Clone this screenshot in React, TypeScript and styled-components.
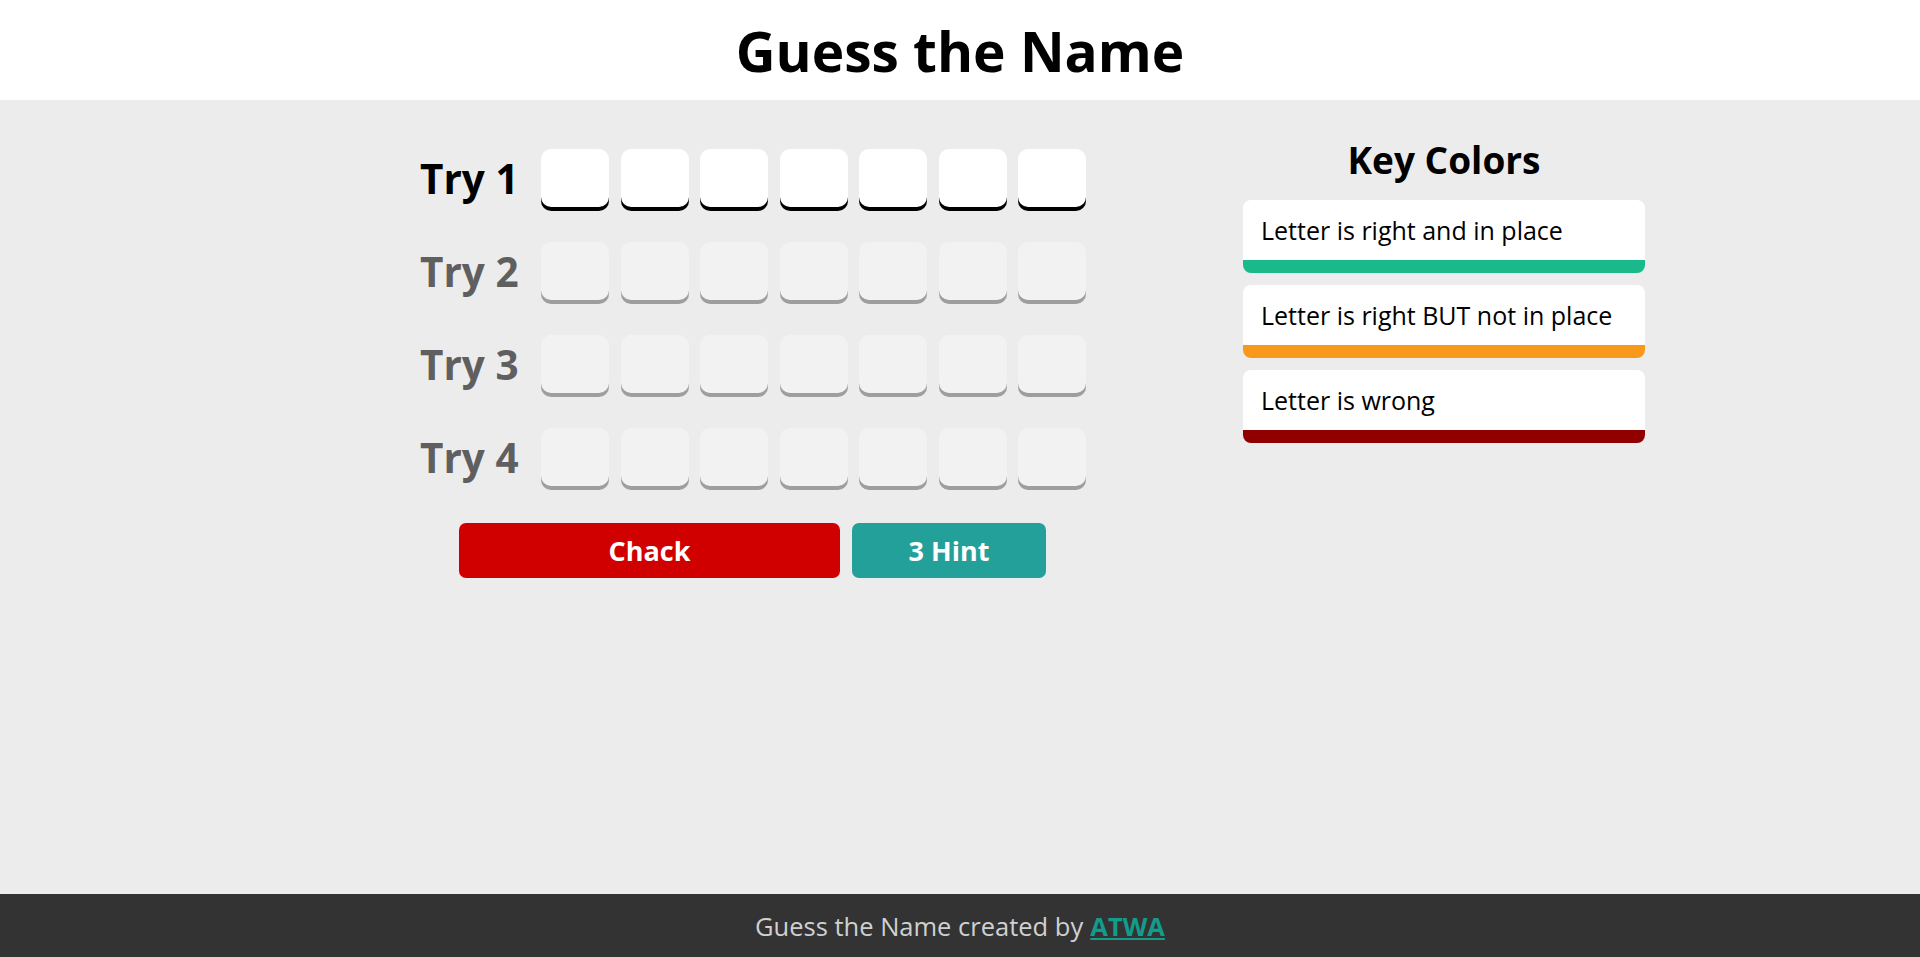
import styled, { createGlobalStyle } from "styled-components"

const GlobalStyle = createGlobalStyle`
  * {
    box-sizing: border-box;
  }
  body {
    margin: 0;
    font-family: "Open Sans", "Noto Sans", sans-serif;
    background-color: #ececec;
  }
`

const tries = [1, 2, 3, 4]
const letters = 7

const keys = [
  { text: "Letter is right and in place", color: "#19b98b" },
  { text: "Letter is right BUT not in place", color: "#f8991b" },
  { text: "Letter is wrong", color: "#900000" },
]

export default function App() {
  return (
    <Page>
      <GlobalStyle />
      <Header>
        <Title>Guess the Name</Title>
      </Header>
      <Main>
        <Game>
          {tries.map((n) => (
            <TryRow key={n}>
              <TryLabel active={n === 1}>Try {n}</TryLabel>
              <Boxes>
                {Array.from({ length: letters }).map((_, i) => (
                  <LetterBox key={i} active={n === 1} />
                ))}
              </Boxes>
            </TryRow>
          ))}
          <Controls>
            <CheckButton>Chack</CheckButton>
            <HintButton>3 Hint</HintButton>
          </Controls>
        </Game>
        <KeyColors>
          <KeyTitle>Key Colors</KeyTitle>
          {keys.map((k) => (
            <KeyCard key={k.text} band={k.color}>
              {k.text}
            </KeyCard>
          ))}
        </KeyColors>
      </Main>
      <Footer>
        Guess the Name created by <FooterLink href="#">ATWA</FooterLink>
      </Footer>
    </Page>
  )
}

const Page = styled.div`
  display: flex;
  flex-direction: column;
  min-height: 100vh;
`

const Header = styled.header`
  height: 100px;
  display: flex;
  align-items: center;
  justify-content: center;
  background-color: #fff;
`

const Title = styled.h1`
  margin: 0;
  font-size: 55px;
  font-weight: 700;
  color: #000;
`

const Main = styled.main`
  flex: 1;
  display: flex;
  align-items: flex-start;
  padding: 34px 275px 0 420px;
  justify-content: space-between;
`

const Game = styled.div`
  display: flex;
  flex-direction: column;
  gap: 35px;
  margin-top: 15px;
`

const TryRow = styled.div`
  display: flex;
  align-items: center;
`

const TryLabel = styled.span<{ active?: boolean }>`
  width: 121px;
  font-size: 40.5px;
  font-weight: 700;
  color: ${(p) => (p.active ? "#000" : "#5f5f5f")};
`

const Boxes = styled.div`
  display: flex;
  gap: 11.5px;
`

const LetterBox = styled.div<{ active?: boolean }>`
  width: 68px;
  height: 58px;
  border-radius: 10px;
  background-color: ${(p) => (p.active ? "#fff" : "#f2f2f2")};
  box-shadow: 0 4px 0 ${(p) => (p.active ? "#000" : "#9e9e9e")};
`

const Controls = styled.div`
  display: flex;
  gap: 12px;
  padding-left: 39px;
  margin-top: 2px;
`

const Button = styled.button`
  height: 55px;
  border: none;
  border-radius: 7px;
  color: #fff;
  font-family: "Open Sans", "Noto Sans", sans-serif;
  font-size: 27px;
  font-weight: 700;
  cursor: pointer;
`

const CheckButton = styled(Button)`
  width: 381px;
  background-color: #d10000;
`

const HintButton = styled(Button)`
  width: 194px;
  background-color: #24a09a;
`

const KeyColors = styled.div`
  width: 402px;
  display: flex;
  flex-direction: column;
  gap: 12px;
`

const KeyTitle = styled.h2`
  margin: 0 0 3px;
  text-align: center;
  font-size: 37px;
  font-weight: 700;
  color: #000;
`

const KeyCard = styled.div<{ band: string }>`
  height: 73px;
  display: flex;
  align-items: center;
  padding: 0 18px;
  background-color: #fff;
  border-bottom: 13px solid ${(p) => p.band};
  border-radius: 8px;
  font-size: 25px;
  color: #000;
`

const Footer = styled.footer`
  height: 63px;
  display: flex;
  align-items: center;
  justify-content: center;
  gap: 0.28em;
  background-color: #333;
  color: #d0d0d0;
  font-size: 25.5px;
`

const FooterLink = styled.a`
  color: #129c8c;
  font-weight: 700;
`
